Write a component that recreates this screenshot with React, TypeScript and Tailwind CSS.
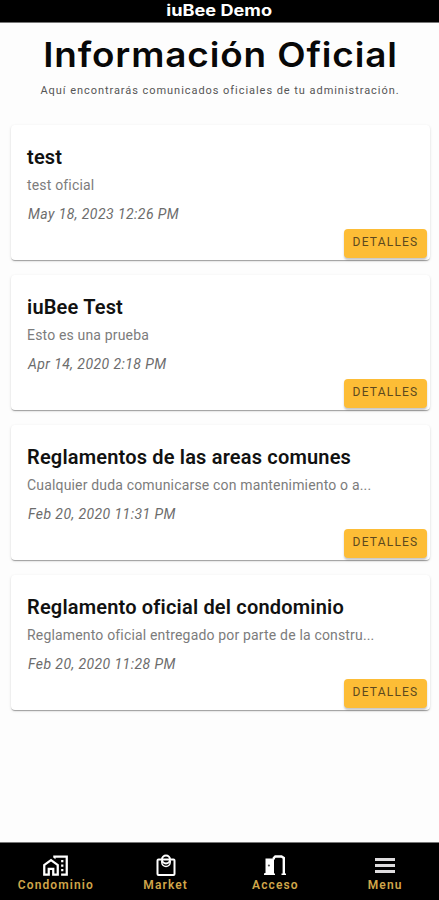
import type { ReactNode } from "react";
import { MdOutlineHomeWork } from "react-icons/md";

type Notice = { title: string; text: string; date: string };

const notices: Notice[] = [
  { title: "test", text: "test oficial", date: "May 18, 2023 12:26 PM" },
  { title: "iuBee Test", text: "Esto es una prueba", date: "Apr 14, 2020 2:18 PM" },
  { title: "Reglamentos de las areas comunes", text: "Cualquier duda comunicarse con mantenimiento o a...", date: "Feb 20, 2020 11:31 PM" },
  { title: "Reglamento oficial del condominio", text: "Reglamento oficial entregado por parte de la constru...", date: "Feb 20, 2020 11:28 PM" },
];

function NoticeCard({ notice }: { notice: Notice }) {
  return (
    <article className="flex h-[135px] flex-col whitespace-nowrap rounded-[4px] bg-white pl-4 pr-[3px] pt-[19px] shadow-[0_2px_1px_-1px_rgba(0,0,0,0.2),0_1px_1px_rgba(0,0,0,0.14),0_1px_3px_rgba(0,0,0,0.12)]">
      <h2 className="h-[26px] text-[20px] font-semibold leading-[26px] tracking-[0.18px] text-[#111]">{notice.title}</h2>
      <p className="mt-[5px] h-5 text-[14px] leading-5 tracking-[0.17px] text-[#7c7c7c]">{notice.text}</p>
      <p className="mt-[9px] h-5 pl-px text-[14px] italic leading-5 tracking-[0.43px] text-[#6c6c6c]">{notice.date}</p>
      <button className="mt-[5px] h-[29px] w-[83px] self-end rounded-[4px] bg-[#fdbd36] text-[12px] tracking-[1.2px] text-[#5c481f] shadow-[0_2px_2px_rgba(0,0,0,0.22)]">
        <span className="block h-[29px] leading-[27px]">DETALLES</span>
      </button>
    </article>
  );
}

function BagIcon() {
  return (
    <svg width="20" height="23" viewBox="0 0 20 23" fill="none" stroke="#fff" strokeWidth="2">
      <rect x="1.5" y="5.5" width="17" height="15.5" rx="1" />
      <circle cx="10" cy="5.5" r="4" />
      <path d="M5.8 7v1.2a4.2 4.2 0 0 0 8.4 0V7" strokeWidth="1.5" />
    </svg>
  );
}

function DoorIcon() {
  return (
    <svg width="22" height="21" viewBox="0 0 22 21" fill="none">
      <path d="M1.5 3.5h8.5v16.5H0.5v-2h1z" fill="#fff" />
      <path d="M9.8 4.5V3l1.5-1.5h6.2L19.8 3v16.2" stroke="#fff" strokeWidth="2.4" />
      <path d="M0 19.3h11M17.5 19.3H22" stroke="#fff" strokeWidth="1.6" />
      <circle cx="4.9" cy="10.5" r="1.1" fill="#555" />
    </svg>
  );
}

function MenuIcon() {
  return (
    <svg width="20" height="15" viewBox="0 0 20 15" fill="#dedcde">
      <path d="M0 0h20v3H0zM0 6h20v3H0zM0 12h20v3H0z" />
    </svg>
  );
}

function NavItem({ icon, label }: { icon: ReactNode; label: string }) {
  return (
    <button className="flex flex-col items-center pl-[2px] pt-[9px]">
      <span className="flex h-[26px] items-center justify-center text-white">{icon}</span>
      <span className="text-[12px] font-semibold leading-[14px] tracking-[1.1px] text-[#d0a64a]">{label}</span>
    </button>
  );
}

export default function App() {
  return (
    <div className="flex h-[900px] w-[439px] flex-col overflow-hidden bg-[#fdfdfd] font-['Roboto',sans-serif]">
      <header className="h-[23px] shrink-0 border-b border-[#777] bg-black text-center font-['Inter',sans-serif] text-[15.5px] font-bold leading-[21px] text-white">
        <span className="inline-block scale-x-[1.17]">iuBee Demo</span>
      </header>
      <section className="flex h-[102px] shrink-0 flex-col items-center whitespace-nowrap">
        <h1 className="mt-[10px] h-[44px] scale-x-[1.085] pl-[2px] font-['Inter',sans-serif] text-[34px] font-semibold leading-[44px] tracking-[0.8px] text-[#080808]">Información Oficial</h1>
        <p className="mt-[6px] pl-px text-[11px] leading-4 tracking-[0.95px] text-[#555]">Aquí encontrarás comunicados oficiales de tu administración.</p>
      </section>
      <main className="flex flex-1 flex-col gap-[15px] pl-[11px] pr-[9px]">
        {notices.map((notice) => (
          <NoticeCard key={notice.title} notice={notice} />
        ))}
      </main>
      <nav className="grid h-[58px] shrink-0 grid-cols-4 border-t border-[#777] bg-black">
        <NavItem icon={<MdOutlineHomeWork size={27} />} label="Condominio" />
        <NavItem icon={<BagIcon />} label="Market" />
        <NavItem icon={<DoorIcon />} label="Acceso" />
        <NavItem icon={<MenuIcon />} label="Menu" />
      </nav>
    </div>
  );
}
